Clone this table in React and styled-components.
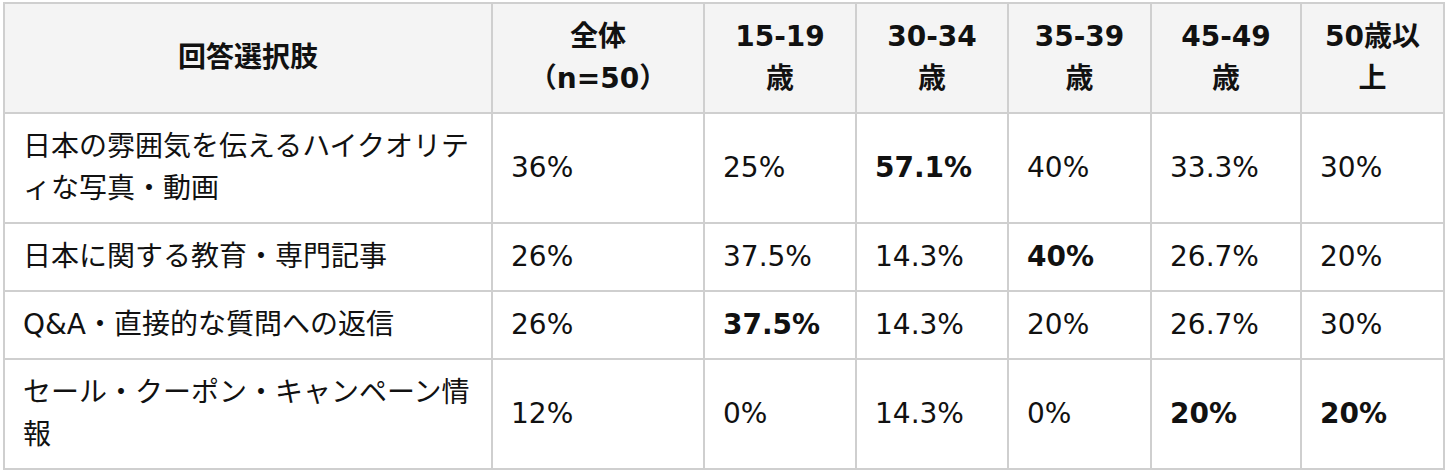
import React from 'react'
import styled, { createGlobalStyle } from 'styled-components'

const GlobalStyle = createGlobalStyle`
  html, body {
    margin: 0;
    padding: 0;
    background: #ffffff;
  }
`

const Wrapper = styled.div`
  padding: 2px 3px;
  font-family: "DejaVu Sans", "Noto Sans CJK JP", sans-serif;
  color: #111;
`

const Table = styled.table`
  width: 1441px;
  table-layout: fixed;
  border-collapse: collapse;
  border: 2px solid #cfcfcf;
  font-size: 28px;
  line-height: 42px;
`

const Col = styled.col`
  width: ${p => p.w}px;
`

const Th = styled.th`
  background: #f4f4f4;
  border: 2px solid #cfcfcf;
  padding: 12px 18px;
  font-weight: 700;
  text-align: center;
  vertical-align: middle;
`

const Td = styled.td`
  border: 2px solid #cfcfcf;
  padding: 12px 18px;
  font-weight: ${p => (p.$bold ? 700 : 400)};
  text-align: left;
  vertical-align: middle;
`

const widths = [488, 212, 152, 152, 143, 150, 143]

const headers = [
  ['回答選択肢'],
  ['全体', '（n=50）'],
  ['15-19', '歳'],
  ['30-34', '歳'],
  ['35-39', '歳'],
  ['45-49', '歳'],
  ['50歳以', '上'],
]

const rows = [
  {
    label: '日本の雰囲気を伝えるハイクオリティな写真・動画',
    values: ['36%', '25%', '57.1%', '40%', '33.3%', '30%'],
    bold: [2],
  },
  {
    label: '日本に関する教育・専門記事',
    values: ['26%', '37.5%', '14.3%', '40%', '26.7%', '20%'],
    bold: [3],
  },
  {
    label: 'Q&A・直接的な質問への返信',
    values: ['26%', '37.5%', '14.3%', '20%', '26.7%', '30%'],
    bold: [1],
  },
  {
    label: 'セール・クーポン・キャンペーン情報',
    values: ['12%', '0%', '14.3%', '0%', '20%', '20%'],
    bold: [4, 5],
  },
]

const App = () => {
  return (
    <Wrapper>
      <GlobalStyle />
      <Table>
        <colgroup>
          {widths.map((w, i) => (
            <Col key={i} w={w} />
          ))}
        </colgroup>
        <thead>
          <tr>
            {headers.map((lines, i) => (
              <Th key={i}>
                {lines.map((l, j) => (
                  <React.Fragment key={j}>
                    {j > 0 && <br />}
                    {l}
                  </React.Fragment>
                ))}
              </Th>
            ))}
          </tr>
        </thead>
        <tbody>
          {rows.map((r, i) => (
            <tr key={i}>
              <Td>{r.label}</Td>
              {r.values.map((v, j) => (
                <Td key={j} $bold={r.bold.includes(j)}>
                  {v}
                </Td>
              ))}
            </tr>
          ))}
        </tbody>
      </Table>
    </Wrapper>
  )
}

export default App
